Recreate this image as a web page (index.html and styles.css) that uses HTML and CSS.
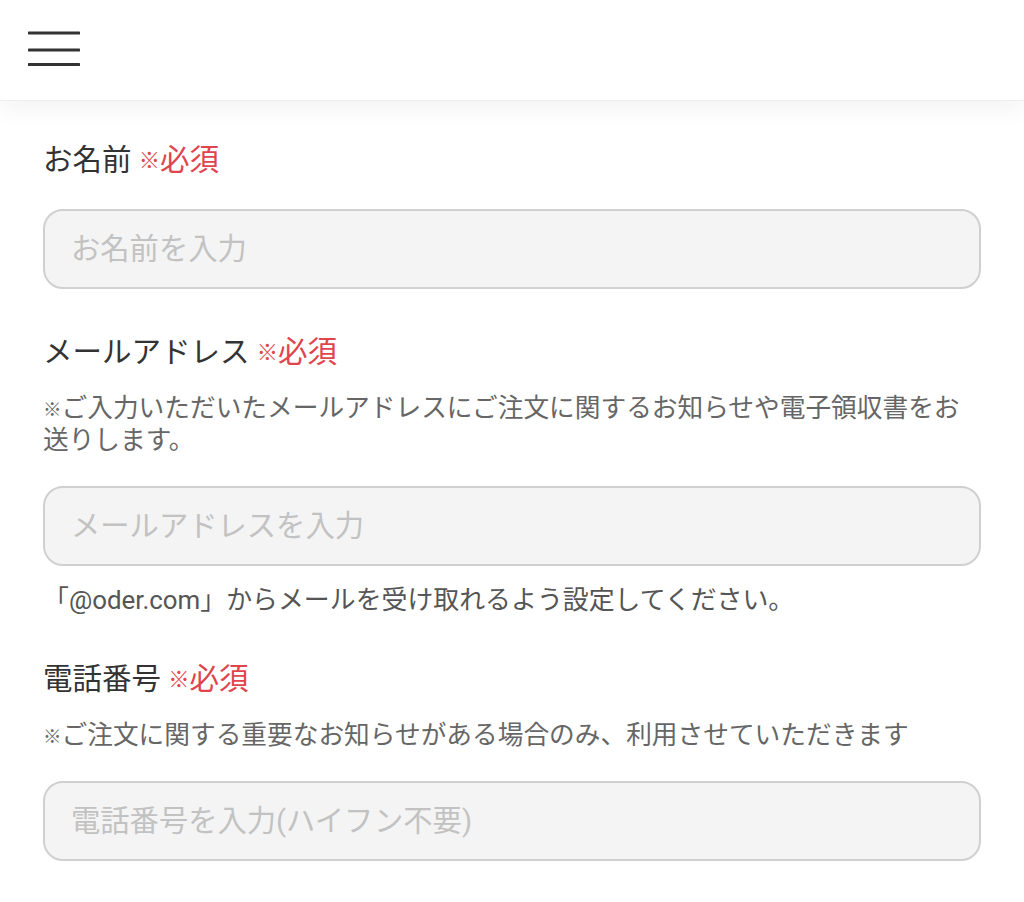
FILE: index.html
```html
<!DOCTYPE html>
<html lang="ja">
  <head>
    <meta charset="UTF-8" />
    <meta name="viewport" content="width=device-width, initial-scale=1.0" />
    <title>お客様情報</title>
    <link rel="stylesheet" href="styles.css">
  </head>
  <body>
    <header class="header">
      <button class="menu-btn" aria-label="メニュー">
        <svg width="52" height="40" viewBox="0 0 52 40">
          <line x1="1" y1="4" x2="51" y2="4" stroke="#333" stroke-width="3.2" stroke-linecap="round" />
          <line x1="1" y1="21" x2="51" y2="21" stroke="#333" stroke-width="3.2" stroke-linecap="round" />
          <line x1="1" y1="35.5" x2="51" y2="35.5" stroke="#333" stroke-width="3.2" stroke-linecap="round" />
        </svg>
      </button>
    </header>

    <main class="form">
      <div class="field">
        <label class="label" for="name">お名前 <span class="required"><span class="mark">※</span>必須</span></label>
        <input class="input" id="name" type="text" placeholder="お名前を入力" />
      </div>

      <div class="field">
        <label class="label has-note" for="email">メールアドレス <span class="required"><span class="mark">※</span>必須</span></label>
        <p class="note"><span class="mark">※</span>ご入力いただいたメールアドレスにご注文に関するお知らせや電子領収書をお送りします。</p>
        <input class="input" id="email" type="email" placeholder="メールアドレスを入力" />
        <p class="hint">「@oder.com」からメールを受け取れるよう設定してください。</p>
      </div>

      <div class="field">
        <label class="label has-note" for="tel">電話番号 <span class="required"><span class="mark">※</span>必須</span></label>
        <p class="note"><span class="mark">※</span>ご注文に関する重要なお知らせがある場合のみ、利用させていただきます</p>
        <input class="input" id="tel" type="tel" placeholder="電話番号を入力(ハイフン不要)" />
      </div>
    </main>
  </body>
</html>
```

FILE: styles.css
```css
body {
  margin: 0;
  padding: 0;
  background-color: #fff;
  font-family: "Roboto", "Noto Sans CJK JP", sans-serif;
  color: #333;
}
.header {
  height: 100px;
  display: flex;
  align-items: center;
  padding-left: 28px;
  border-bottom: 1px solid #eee;
  box-shadow: 0 8px 24px rgba(0, 0, 0, 0.05);
  background-color: #fff;
}
.menu-btn {
  background: none;
  border: none;
  padding: 0;
  margin-top: -3px;
  display: block;
}
.menu-btn svg {
  display: block;
}
.form {
  padding: 39px 43px 40px;
}
.field {
  margin-bottom: 43px;
}
.label {
  display: block;
  font-size: 29.5px;
  line-height: 40px;
  margin-bottom: 29px;
}
.label.has-note {
  margin-bottom: 20px;
}
.required {
  color: #e0454e;
}
.mark {
  font-size: 0.72em;
  line-height: 1;
  vertical-align: 0.08em;
}
.note {
  margin: 0 0 30px;
  font-size: 25.7px;
  line-height: 32px;
  color: #666;
}
.input {
  display: block;
  width: 100%;
  box-sizing: border-box;
  height: 80px;
  padding: 0 26px;
  border: 2px solid #d0d0d0;
  border-radius: 20px;
  background-color: #f4f4f4;
  font-family: "Roboto", "Noto Sans CJK JP", sans-serif;
  font-size: 29.3px;
  color: #333;
  outline: none;
}
.input::placeholder {
  color: #c2c2c2;
}
.hint {
  margin: 18px 0 0;
  font-size: 25.9px;
  line-height: 32px;
  color: #555;
}
```
